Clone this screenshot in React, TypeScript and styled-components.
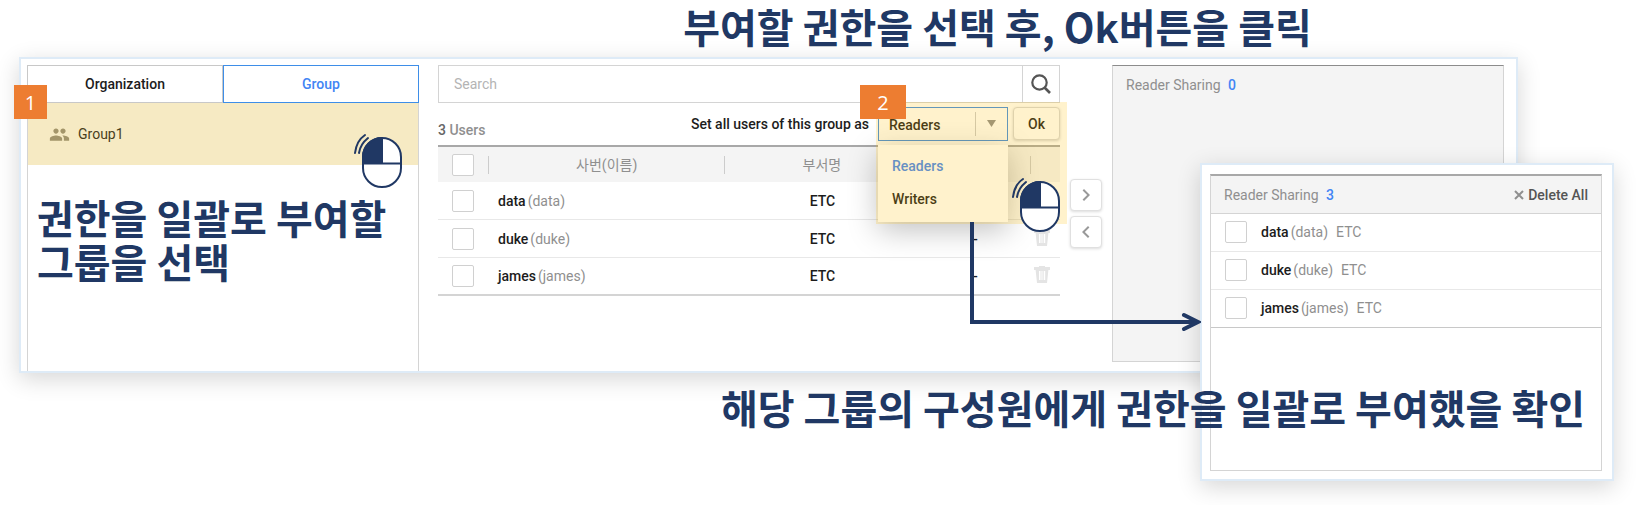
import React from 'react';
import styled, { createGlobalStyle } from 'styled-components';
import { MdPeople, MdChevronLeft, MdChevronRight } from 'react-icons/md';

const NAVY = '#203864';
const LINE = '#d4d4d4';
const BLUE = '#4285f4';

const GlobalStyle = createGlobalStyle`
  *, *::before, *::after { box-sizing: border-box; }
  body {
    margin: 0;
    background: #fff;
    color: #1c1c1c;
    font: 400 14px/20px Roboto, "Noto Sans CJK KR", sans-serif;
  }
  button, input, select { font: inherit; color: inherit; margin: 0; }
  ul { list-style: none; margin: 0; padding: 0; }
`;

const Page = styled.main`
  position: relative;
  min-height: 505px;
  overflow: hidden;
`;

const Caption = styled.h2`
  margin: 0;
  color: ${NAVY};
  font: 700 40px/44px "Noto Sans CJK KR", sans-serif;
`;

const TopCaption = styled(Caption)`
  padding: 4px 0 9px 358px;
  text-align: center;
  white-space: nowrap;
`;

const GroupCaption = styled(Caption)`
  padding: 30px 0 0 9px;
  white-space: nowrap;
`;

const BottomCaption = styled(Caption)`
  position: relative;
  z-index: 5;
  padding: 12px 52px 0 0;
  text-align: right;
  white-space: nowrap;
`;

const Panel = styled.section`
  background: #fff;
  border: 2px solid #deebf7;
  box-shadow: 0 6px 22px rgba(0, 0, 0, 0.16);
`;

const MainPanel = styled(Panel)`
  display: grid;
  grid-template-columns: 392fr 631fr 32px 392fr;
  column-gap: 10px;
  margin: 0 119px 0 19px;
  padding: 6px 12px 0 6px;
`;

const GroupColumn = styled.div`
  position: relative;
  min-height: 306px;
  border: solid ${LINE};
  border-width: 0 1px;
`;

const Tabs = styled.div`
  display: flex;
  margin: 0 -1px;
`;

const Tab = styled.button<{ $active?: boolean }>`
  flex: 1;
  height: 38px;
  padding: 0;
  background: #fff;
  border: 1px solid ${(p) => (p.$active ? '#3e8ee8' : '#c8c8c8')};
  color: ${(p) => (p.$active ? BLUE : '#1c1c1c')};
  font-weight: 500;
`;

const GroupRow = styled.div`
  display: flex;
  align-items: center;
  gap: 8px;
  height: 62px;
  padding: 0 0 0 21px;
  background: #f6eac3;
  color: #4a3f20;
  svg { color: #a39569; }
`;

const Badge = styled.span<{ $wide?: boolean }>`
  position: absolute;
  z-index: 4;
  top: 20px;
  left: -14px;
  width: ${(p) => (p.$wide ? 46 : 33)}px;
  height: 34px;
  background: #ed7d31;
  color: #fff;
  font: 400 20px/36px "Open Sans", sans-serif;
  text-align: center;
`;

const StepTwo = styled(Badge)`
  top: -22px;
  left: -18px;
`;

const Click = styled.svg`
  position: absolute;
  z-index: 4;
  width: 50px;
  height: 56px;
`;

const GroupClick = styled(Click)`
  top: 68px;
  right: 15px;
`;

const OkClick = styled(Click)`
  top: 74px;
  right: -1px;
`;

const UsersColumn = styled.div`
  padding-left: 9px;
`;

const SearchBar = styled.form`
  display: flex;
  height: 38px;
  border: 1px solid ${LINE};
`;

const SearchInput = styled.input`
  flex: 1;
  min-width: 0;
  padding: 0 15px;
  border: 0;
  background: none;
  outline: 0;
  &::placeholder { color: #b4b4b4; opacity: 1; }
`;

const SearchButton = styled.button`
  display: grid;
  place-items: center;
  width: 37px;
  padding: 0;
  border: 0;
  border-left: 1px solid ${LINE};
  background: none;
  color: #555;
`;

const Controls = styled.div`
  position: relative;
  display: flex;
  align-items: flex-start;
  height: 42px;
  padding-top: 4px;
`;

const Count = styled.span`
  flex: 1;
  padding-top: 13px;
  color: #8f8f8f;
  font-weight: 500;
  b { color: #666; font-weight: 500; }
`;

const RoleLabel = styled.label`
  padding: 7px 9px 0 0;
  font-weight: 500;
`;

const RoleField = styled.div`
  position: relative;
  width: 130px;
  margin-right: 5px;
`;

const RoleSelect = styled.select`
  display: block;
  width: 100%;
  height: 34px;
  padding: 2px 0 0 10px;
  appearance: none;
  border: 1px solid #3e8ee8;
  border-radius: 0;
  background: #fff;
  font-weight: 500;
`;

const SelectArrow = styled.svg`
  position: absolute;
  top: 5px;
  right: 11px;
  width: 22px;
  height: 24px;
  pointer-events: none;
`;

const Menu = styled.ul`
  position: absolute;
  z-index: 2;
  top: 38px;
  left: 0;
  width: 100%;
  padding: 5px 0 6px;
  background: #fff;
  box-shadow: 0 8px 30px rgba(0, 0, 0, 0.25);
`;

const Option = styled.li<{ $active?: boolean }>`
  padding: 6px 14px 7px;
  color: ${(p) => (p.$active ? BLUE : '#1c1c1c')};
  font-weight: 500;
`;

const OkButton = styled.button`
  width: 47px;
  height: 33px;
  padding: 0;
  border: 1px solid #d8d8d8;
  border-radius: 4px;
  background: #fff;
  box-shadow: 0 1px 3px rgba(0, 0, 0, 0.18);
  font-weight: 500;
`;

const Highlight = styled.div`
  position: absolute;
  z-index: 3;
  top: -1px;
  right: -7px;
  width: 191px;
  height: 122px;
  background: rgba(255, 192, 0, 0.2);
  pointer-events: none;
`;

const Connector = styled.svg`
  position: absolute;
  z-index: 4;
  top: 115px;
  left: 91px;
  width: 232px;
  height: 112px;
`;

const UserTable = styled.table`
  width: 100%;
  table-layout: fixed;
  border-spacing: 0;
  text-align: center;
  th, td { padding: 0; }
  th {
    height: 37px;
    border-top: 2px solid #a8a8a8;
    background: #f4f4f4;
    color: #8f8f8f;
    font-weight: 400;
  }
  td {
    height: 38px;
    border-bottom: 1px solid #e8e8e8;
    font-weight: 500;
  }
  tr:last-child td { border-bottom: 2px solid ${LINE}; }
`;

const HeadCell = styled.span`
  display: flex;
  align-items: center;
  justify-content: center;
  height: 18px;
  border-right: 1px solid #ccc;
`;

const NameCell = styled.td`
  text-align: left;
  && { padding-left: 9px; }
`;

const Name = styled.span`
  margin-right: 2px;
  font-weight: 500;
`;

const Muted = styled.span`
  color: #8f8f8f;
  font-weight: 400;
`;

const Check = styled.input.attrs({ type: 'checkbox' })`
  display: block;
  flex: none;
  appearance: none;
  width: 22px;
  height: 22px;
  border: 1px solid #d0d0d0;
  border-radius: 2px;
  background: #fff;
`;

const TableCheck = styled(Check)`
  margin-left: 14px;
`;

const IconButton = styled.button`
  display: grid;
  padding: 0;
  margin: 0 0 3px 3px;
  border: 0;
  background: none;
`;

const Transfer = styled.div`
  display: flex;
  flex-direction: column;
  gap: 5px;
  padding-top: 114px;
`;

const TransferButton = styled.button`
  display: grid;
  place-items: center;
  height: 32px;
  padding: 0;
  border: 1px solid #e0e0e0;
  border-radius: 4px;
  background: #fff;
  box-shadow: 0 1px 3px rgba(0, 0, 0, 0.14);
  color: #999;
`;

const ShareBox = styled.div<{ $empty?: boolean }>`
  border: 1px solid ${LINE};
  border-top: ${(p) => (p.$empty ? '1px solid #8c8c8c' : '2px solid #a8a8a8')};
  background: ${(p) => (p.$empty ? '#f4f4f4' : '#fff')};
  margin-bottom: ${(p) => (p.$empty ? 9 : 0)}px;
  min-height: 297px;
`;

const ShareHead = styled.div`
  display: flex;
  align-items: center;
  justify-content: space-between;
  height: 37px;
  padding: 0 13px;
  background: #f4f4f4;
  color: #8f8f8f;
  b { margin-left: 4px; color: ${BLUE}; font-weight: 500; }
`;

const DeleteAll = styled.button`
  display: flex;
  align-items: center;
  gap: 4px;
  padding: 0;
  border: 0;
  background: none;
  color: #555;
  font-weight: 500;
`;

const ResultCard = styled(Panel)`
  position: absolute;
  top: 163px;
  right: 23px;
  width: 414px;
  padding: 9px 10px 8px 8px;
`;

const ShareList = styled.ul`
  border-top: 1px solid ${LINE};
`;

const ShareItem = styled.li`
  height: 38px;
  border-bottom: 1px solid #e8e8e8;
  &:last-child { border-bottom-color: #c8c8c8; }
  label {
    display: flex;
    align-items: center;
    height: 36px;
    padding-left: 14px;
  }
  ${Check} { margin-right: 14px; }
  ${Muted} { margin-right: 8px; }
`;

const users = ['data', 'duke', 'james'];

const mouseArt = (
  <g fill="none" stroke={NAVY} strokeWidth="2" strokeLinecap="round">
    <path d="M2 20C3 12 6 6 12 2" />
    <path d="M6 20C7 13 10 9 15 5" />
    <rect x="10" y="5" width="38" height="49" rx="19" fill="#fff" />
    <path d="M29 5A19 19 0 0 0 10 24V30H29Z" fill={NAVY} />
    <path d="M10 30.500H48" />
  </g>
);

const SearchIcon = () => (
  <svg width="20" height="20" viewBox="0 0 20 20" fill="none" stroke="currentColor">
    <circle cx="8.500" cy="8.500" r="7.200" strokeWidth="2.200" />
    <path d="M13.500 13.500L19 19" strokeWidth="2.600" />
  </svg>
);

const TrashIcon = () => (
  <svg width="16" height="17" viewBox="0 0 16 17" fill="#e4e4e4">
    <path d="M5 0h6v1h5v3H0V1h5z" />
    <path fillRule="evenodd" d="M1.500 3h13l-1.500 14H3zM5 5v9h1.500V5zM7.500 5v9h1V5zM9.700 5v9h1.500V5z" />
  </svg>
);

export default function App() {
  return (
    <>
      <GlobalStyle />
      <Page>
        <TopCaption>부여할 권한을 선택 후, Ok버튼을 클릭</TopCaption>
        <MainPanel>
          <GroupColumn>
            <Tabs>
              <Tab type="button">Organization</Tab>
              <Tab type="button" $active>Group</Tab>
            </Tabs>
            <GroupRow>
              <MdPeople size={21} />
              Group1
            </GroupRow>
            <GroupCaption>
              권한을 일괄로 부여할
              <br />
              그룹을 선택
            </GroupCaption>
            <Badge>1</Badge>
            <GroupClick viewBox="0 0 50 56">{mouseArt}</GroupClick>
          </GroupColumn>

          <UsersColumn>
            <SearchBar onSubmit={(e) => e.preventDefault()}>
              <SearchInput type="text" placeholder="Search" aria-label="Search" />
              <SearchButton aria-label="Run search">
                <SearchIcon />
              </SearchButton>
            </SearchBar>
            <Controls>
              <Count>
                <b>3</b> Users
              </Count>
              <RoleLabel htmlFor="role">Set all users of this group as</RoleLabel>
              <RoleField>
                <RoleSelect id="role" defaultValue="Readers">
                  <option>Readers</option>
                  <option>Writers</option>
                </RoleSelect>
                <SelectArrow viewBox="0 0 22 24">
                  <path d="M0.500 0V24" stroke="#ccc" />
                  <path d="M12 8H21L16.500 15Z" fill="#8f8f8f" />
                </SelectArrow>
                <Menu>
                  <Option $active>Readers</Option>
                  <Option>Writers</Option>
                </Menu>
                <StepTwo $wide>2</StepTwo>
                <Connector viewBox="0 0 232 112" fill="none" stroke={NAVY} strokeWidth="4">
                  <path d="M3 0V100H228" />
                  <path d="M215 93L229 100L215 107" strokeLinecap="round" />
                </Connector>
              </RoleField>
              <OkButton type="button">Ok</OkButton>
              <Highlight />
              <OkClick viewBox="0 0 50 56">{mouseArt}</OkClick>
            </Controls>
            <UserTable>
              <colgroup>
                <col style={{ width: '8.200%' }} />
                <col style={{ width: '38%' }} />
                <col style={{ width: '31.200%' }} />
                <col style={{ width: '18%' }} />
                <col />
              </colgroup>
              <thead>
                <tr>
                  <th>
                    <HeadCell>
                      <Check aria-label="Select all users" />
                    </HeadCell>
                  </th>
                  <th><HeadCell>사번(이름)</HeadCell></th>
                  <th><HeadCell>부서명</HeadCell></th>
                  <th><HeadCell /></th>
                  <th />
                </tr>
              </thead>
              <tbody>
                {users.map((user) => (
                  <tr key={user}>
                    <td><TableCheck aria-label={`Select ${user}`} /></td>
                    <NameCell>
                      <Name>{user}</Name>
                      <Muted>({user})</Muted>
                    </NameCell>
                    <td>ETC</td>
                    <td>-</td>
                    <td>
                      <IconButton type="button" aria-label={`Remove ${user}`}>
                        <TrashIcon />
                      </IconButton>
                    </td>
                  </tr>
                ))}
              </tbody>
            </UserTable>
          </UsersColumn>

          <Transfer>
            <TransferButton type="button" aria-label="Add"><MdChevronRight size={24} /></TransferButton>
            <TransferButton type="button" aria-label="Remove"><MdChevronLeft size={24} /></TransferButton>
          </Transfer>

          <ShareBox $empty>
            <ShareHead>
              <span>Reader Sharing <b>0</b></span>
            </ShareHead>
          </ShareBox>
        </MainPanel>

        <BottomCaption>해당 그룹의 구성원에게 권한을 일괄로 부여했을 확인</BottomCaption>

        <ResultCard>
          <ShareBox>
            <ShareHead>
              <span>Reader Sharing <b>3</b></span>
              <DeleteAll type="button">
                <svg width="10" height="10" viewBox="0 0 10 10" stroke="#8f8f8f" strokeWidth="2">
                  <path d="M1 1L9 9M9 1L1 9" />
                </svg>
                Delete All
              </DeleteAll>
            </ShareHead>
            <ShareList>
              {users.map((user) => (
                <ShareItem key={user}>
                  <label>
                    <Check />
                    <Name>{user}</Name>
                    <Muted>({user})</Muted>
                    <Muted>ETC</Muted>
                  </label>
                </ShareItem>
              ))}
            </ShareList>
          </ShareBox>
        </ResultCard>
      </Page>
    </>
  );
}
